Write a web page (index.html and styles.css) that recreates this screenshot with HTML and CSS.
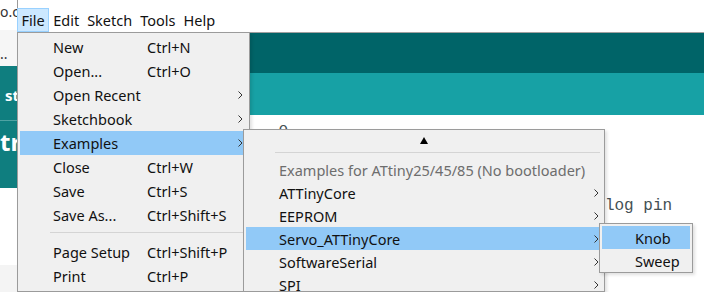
FILE: index.html
```html
<!DOCTYPE html>
<html lang="en">
  <head>
    <meta charset="UTF-8" />
    <title>Arduino - File menu</title>
    <link rel="stylesheet" href="styles.css">
  </head>
  <body>
    <div class="screen">
      <div class="behind">
        <div class="behind-top">o.c</div>
        <div class="behind-gray">..</div>
        <div class="behind-teal">
          <div class="behind-row small">st</div>
          <div class="behind-row big">tr</div>
        </div>
        <div class="behind-white"></div>
        <div class="behind-foot"></div>
      </div>
      <div class="app">
        <div class="menubar">
          <span class="mb-item active">File</span>
          <span class="mb-item">Edit</span>
          <span class="mb-item">Sketch</span>
          <span class="mb-item">Tools</span>
          <span class="mb-item">Help</span>
        </div>
        <div class="toolbar"></div>
        <div class="tabs"></div>
        <div class="code">
          <div class="code-line">                        o</div>
          <div class="code-line"> </div>
          <div class="code-line"> </div>
          <div class="code-line"> </div>
          <div class="code-line">int potpin = A0;                                    // analog pin</div>
        </div>
      </div>
    </div>

    <div class="menu main-menu">
      <div class="mi"><span class="lbl">New</span><span class="key">Ctrl+N</span></div>
      <div class="mi"><span class="lbl">Open...</span><span class="key">Ctrl+O</span></div>
      <div class="mi"><span class="lbl">Open Recent</span><svg class="chev" width="5" height="8" viewBox="0 0 5 8"><polyline points="0.5,0.5 4,4 0.5,7.5" /></svg></div>
      <div class="mi"><span class="lbl">Sketchbook</span><svg class="chev" width="5" height="8" viewBox="0 0 5 8"><polyline points="0.5,0.5 4,4 0.5,7.5" /></svg></div>
      <div class="mi hot"><span class="lbl">Examples</span><svg class="chev" width="5" height="8" viewBox="0 0 5 8"><polyline points="0.5,0.5 4,4 0.5,7.5" /></svg></div>
      <div class="mi"><span class="lbl">Close</span><span class="key">Ctrl+W</span></div>
      <div class="mi"><span class="lbl">Save</span><span class="key">Ctrl+S</span></div>
      <div class="mi"><span class="lbl">Save As...</span><span class="key">Ctrl+Shift+S</span></div>
      <div class="sep"></div>
      <div class="mi"><span class="lbl">Page Setup</span><span class="key">Ctrl+Shift+P</span></div>
      <div class="mi"><span class="lbl">Print</span><span class="key">Ctrl+P</span></div>
    </div>

    <div class="menu sub-menu">
      <div class="scroll-up">
        <svg width="8" height="7" viewBox="0 0 8 7"><polygon points="4,0 8,7 0,7" /></svg>
      </div>
      <div class="sep"></div>
      <div class="mi disabled"><span class="lbl">Examples for ATtiny25/45/85 (No bootloader)</span></div>
      <div class="mi"><span class="lbl">ATTinyCore</span><svg class="chev" width="5" height="8" viewBox="0 0 5 8"><polyline points="0.5,0.5 4,4 0.5,7.5" /></svg></div>
      <div class="mi"><span class="lbl">EEPROM</span><svg class="chev" width="5" height="8" viewBox="0 0 5 8"><polyline points="0.5,0.5 4,4 0.5,7.5" /></svg></div>
      <div class="mi hot"><span class="lbl">Servo_ATTinyCore</span><svg class="chev" width="5" height="8" viewBox="0 0 5 8"><polyline points="0.5,0.5 4,4 0.5,7.5" /></svg></div>
      <div class="mi"><span class="lbl">SoftwareSerial</span><svg class="chev" width="5" height="8" viewBox="0 0 5 8"><polyline points="0.5,0.5 4,4 0.5,7.5" /></svg></div>
      <div class="mi"><span class="lbl">SPI</span><svg class="chev" width="5" height="8" viewBox="0 0 5 8"><polyline points="0.5,0.5 4,4 0.5,7.5" /></svg></div>
    </div>

    <div class="menu knob-menu">
      <div class="mi hot"><span class="lbl">Knob</span></div>
      <div class="mi"><span class="lbl">Sweep</span></div>
    </div>
  </body>
</html>
```

FILE: styles.css
```css
* {
  box-sizing: border-box;
}

body {
  margin: 0;
  width: 704px;
  height: 292px;
  overflow: hidden;
  position: relative;
  background: #ffffff;
  font-family: "Noto Sans", "DejaVu Sans", sans-serif;
  font-size: 14.5px;
  color: #111111;
}

.screen {
  display: flex;
  height: 292px;
}

/* window peeking out on the left */
.behind {
  width: 17px;
  flex-shrink: 0;
  display: flex;
  flex-direction: column;
  overflow: hidden;
  white-space: nowrap;
}
.behind-top {
  flex: none;
  height: 30px;
  padding-top: 2px;
  color: #333333;
  font-size: 14px;
}
.behind-gray {
  flex: none;
  height: 36px;
  padding-top: 14px;
  background: #f6f6f6;
  color: #333333;
  font-size: 14px;
}
.behind-teal {
  flex: none;
  height: 122px;
  background: #0f7e7f;
  color: #ffffff;
  font-weight: bold;
}
.behind-row.small {
  height: 55px;
  padding: 19px 0 0 5px;
  font-size: 15px;
  border-bottom: 1px solid #4fa3a3;
}
.behind-row.big {
  padding-top: 6px;
  font-size: 24px;
  line-height: 30px;
}
.behind-white {
  flex: none;
  height: 77px;
}
.behind-foot {
  flex: 1;
  background: #f4f4f4;
}

/* arduino window */
.app {
  flex: 1;
  min-width: 0;
  display: grid;
  grid-template-rows: 33px 40px 42px 1fr;
  border-left: 1px solid #9a9a9a;
}
.menubar {
  padding-top: 8px;
  display: flex;
  align-items: flex-start;
  border-bottom: 1px solid #a0a0a0;
}
.mb-item {
  height: 24px;
  line-height: 22px;
  padding: 0 3px;
  border: 1px solid transparent;
}
.mb-item.active {
  margin-left: -1px;
  padding: 0 3.5px;
  background: #cce8ff;
  border-color: #99d1ff;
}
.toolbar {
  background: #006468;
}
.tabs {
  background: #17a1a5;
}
.code {
  overflow: hidden;
  padding: 6px 0 0 30px;
  font-family: "Liberation Mono", monospace;
  font-size: 16px;
  line-height: 19px;
  color: #434f54;
}
.code-line {
  height: 19px;
  white-space: pre;
}

/* popup menus */
.menu {
  position: absolute;
  background: #f0f0f0;
  border: 1px solid #9b9b9b;
  padding: 2px;
  box-shadow: 2px 2px 3px rgba(0, 0, 0, 0.12);
}
.mi {
  height: 24px;
  display: flex;
  align-items: center;
  padding-left: 33px;
  white-space: nowrap;
}
.mi.hot {
  background: #91c9f7;
}
.mi.disabled {
  color: #6d6d6d;
}
.main-menu .lbl {
  width: 94px;
}
.chev {
  margin-left: auto;
  margin-right: 4px;
  fill: none;
  stroke: #333333;
  stroke-width: 1;
}
.sep {
  height: 1px;
  background: #d4d4d4;
}

.main-menu {
  left: 17px;
  top: 32px;
  width: 233px;
  height: 260px;
}
.main-menu .sep {
  margin: 5px 0 7px 30px;
}

.sub-menu {
  left: 243px;
  top: 129px;
  width: 362px;
  height: 163px;
  padding-top: 0;
}
.sub-menu .mi {
  height: 23px;
}
.sub-menu .chev {
  margin-right: 3px;
}
.scroll-up {
  height: 22px;
  display: flex;
  justify-content: center;
  align-items: center;
  padding-bottom: 2px;
}
.scroll-up svg {
  fill: #000000;
}
.sub-menu .sep {
  margin: 0 2px 5px 29px;
}

.knob-menu {
  left: 599px;
  top: 223px;
  width: 94px;
  padding-bottom: 0;
}
.knob-menu .mi {
  height: 23px;
}
```
